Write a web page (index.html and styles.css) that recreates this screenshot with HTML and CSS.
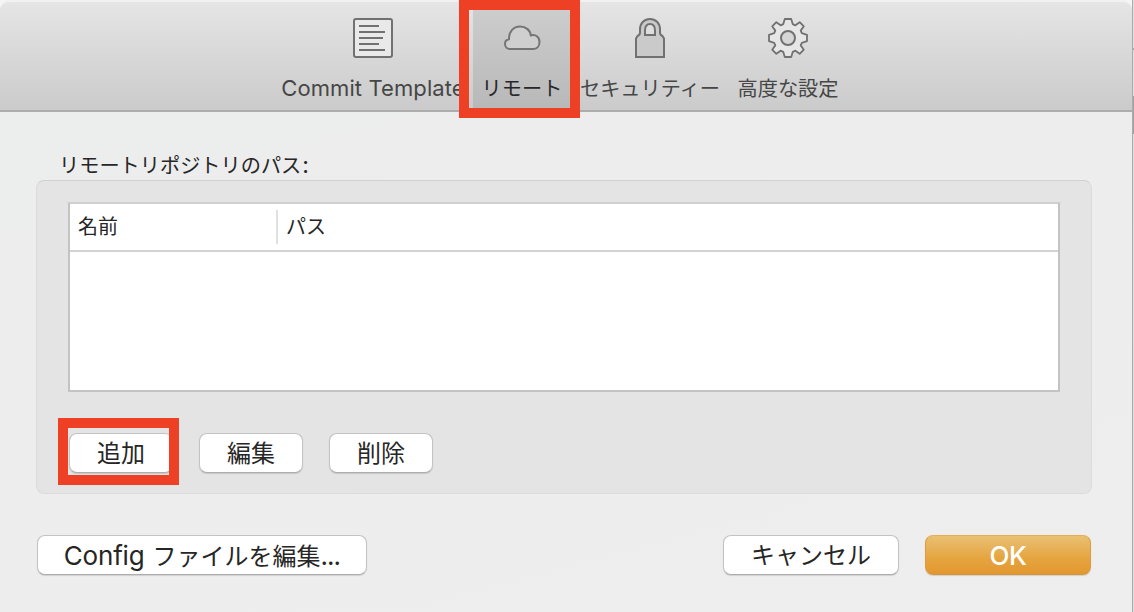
FILE: index.html
```html
<!DOCTYPE html>
<html lang="ja">
<head>
<meta charset="utf-8">
<title>リモート</title>
<link rel="stylesheet" href="styles.css">
</head>
<body>
<div class="window">
  <header class="toolbar">
    <div class="tab">
      <svg class="icon" viewBox="0 0 42 42"><rect x="2" y="2" width="38" height="38" rx="2" fill="#e9e9e9" stroke="#717171" stroke-width="2"/><path d="M7 9h20M7 15h26M7 21h24M7 27h20M7 33h26" stroke="#717171" stroke-width="2"/></svg>
      <span class="tab-label latin">Commit Template</span>
    </div>
    <div class="tab selected">
      <svg class="icon" viewBox="0 0 42 42"><path d="M9 32C6 32 4 29.800 4 27C4 24.500 5.500 22.600 8 22.200C7.500 15 12.500 9.500 19 9.500C25 9.500 29.500 13.500 29.700 18.500C34.500 16.500 38.500 20.500 38.500 25C38.500 29.500 35.500 32 32 32Z" fill="#cfcfcf" stroke="#757575" stroke-width="2" stroke-linejoin="round"/></svg>
      <span class="tab-label">リモート</span>
    </div>
    <div class="tab">
      <svg class="icon" viewBox="0 0 42 42"><path d="M7 40V21.500L8.500 19Q11 18 11 15.500V12.500C11 6 15.500 2 21 2S31 6 31 12.500V15.500Q31 18 33.500 19L35 21.500V40ZM16 18H26V13.500C26 9.500 24 7 21 7S16 9.500 16 13.500Z" fill="#cacaca" fill-rule="evenodd" stroke="#717171" stroke-width="2"/></svg>
      <span class="tab-label security">セキュリティー</span>
    </div>
    <div class="tab">
      <svg class="icon" viewBox="0 0 42 42"><path d="M17.800 2H24.200L25.800 7.200L28.400 8.300L32.700 5.200L36.800 9.300L33.700 13.600L34.800 16.200L40 17.800V24.200L34.800 25.800L33.700 28.400L36.800 32.700L32.700 36.800L28.400 33.700L25.800 34.800L24.200 40H17.800L16.200 34.800L13.600 33.700L9.300 36.800L5.200 32.700L8.300 28.400L7.200 25.800L2 24.200V17.800L7.200 16.200L8.300 13.600L5.200 9.300L9.300 5.200L13.600 8.300L16.200 7.200Z" fill="#e6e6e6" stroke="#717171" stroke-width="1.800" stroke-linejoin="round"/><circle cx="21" cy="21" r="7" fill="#d6d6d6" stroke="#717171" stroke-width="2"/></svg>
      <span class="tab-label">高度な設定</span>
    </div>
  </header>
  <main class="content">
    <h1 class="caption">リモートリポジトリのパス<span class="colon">:</span></h1>
    <section class="group">
      <div class="table">
        <div class="table-head">
          <div class="cell name">名前</div>
          <div class="cell">パス</div>
        </div>
      </div>
      <div class="actions">
        <button class="button">追加</button>
        <button class="button">編集</button>
        <button class="button">削除</button>
      </div>
    </section>
    <footer class="footer">
      <button class="button config"><span class="config-latin">Config</span>ファイルを編集<span class="dots">...</span></button>
      <button class="button cancel">キャンセル</button>
      <button class="button ok">OK</button>
    </footer>
  </main>
</div>
<div class="scroll-edge"></div>
<div class="highlight highlight-tab"></div>
<div class="highlight highlight-add"></div>
</body>
</html>
```
FILE: styles.css
```css
* { box-sizing: border-box; }
body {
  margin: 0;
  width: 1134px;
  height: 612px;
  overflow: hidden;
  position: relative;
  display: flex;
  background: #f5f5f5;
  color: #262626;
  font-family: Inter, "Noto Sans CJK JP", sans-serif;
}
.window {
  width: 1132px;
  height: 612px;
  background: linear-gradient(165deg, #ebeded 0, #ededed 30%, #eeeeee 100%);
  border-radius: 10px 10px 0 0;
}
.toolbar {
  height: 112px;
  display: flex;
  padding-left: 273px;
  border-radius: 10px 10px 0 0;
  border-top: 2px solid #f1f1f1;
  border-bottom: 2px solid #adadad;
  background: linear-gradient(#e5e5e5, #cbcbcb);
}
.tab {
  width: 118px;
  padding-top: 15px;
  display: flex;
  flex-direction: column;
  align-items: center;
  color: #464646;
}
.tab:nth-child(1) { width: 200px; }
.tab:nth-child(2) { width: 98px; }
.tab:nth-child(3) { width: 158px; }
.tab:nth-child(2).selected { background: linear-gradient(#cecece, #b8b8b8); color: #272727; }
.icon { width: 42px; height: 42px; flex: none; }
.tab-label {
  margin-top: 15px;
  font-size: 20.200px;
  line-height: 30px;
  white-space: nowrap;
}
.latin { margin-top: 14px; font-size: 22px; letter-spacing: 0.100px; }
.content { padding: 39px 40px 0 36px; }
.caption {
  margin: 0 0 0 23px;
  height: 29px;
  font-size: 20.200px;
  font-weight: 400;
  line-height: 30px;
}
.colon { font-size: 23px; line-height: 1; margin-left: 1px; }
.group {
  height: 314px;
  padding: 21px 31px;
  border: 1px solid #dcdcdc;
  border-top-color: #d1d1d1;
  border-radius: 8px;
  background: #e4e4e4;
}
.table {
  height: 190px;
  border: 2px solid #c3c3c3;
  border-top-color: #d0d0d0;
  background: #fff;
}
.table-head {
  height: 48px;
  display: flex;
  align-items: center;
  border-bottom: 2px solid #d2d2d2;
}
.cell {
  height: 34px;
  padding-left: 8px;
  font-size: 20px;
  line-height: 34px;
}
.name { width: 208px; border-right: 2px solid #e1e1e1; }
.actions { display: flex; gap: 26px; margin: 41px 0 0 1px; }
.button {
  width: 104px;
  height: 40px;
  padding: 2px 0 0;
  border: 1px solid #c3c3c3;
  border-bottom-color: #adadad;
  border-radius: 8px;
  background: #fff;
  box-shadow: 0 1px 1px rgba(0, 0, 0, 0.13);
  color: #262626;
  font: 24px/36px Inter, "Noto Sans CJK JP", sans-serif;
  white-space: nowrap;
}
.footer { display: flex; padding: 41px 1px 0 1px; }
.config { width: 330px; }
.config-latin { font-size: 26px; letter-spacing: -0.200px; margin-right: 8px; }
.dots { font-size: 26px; letter-spacing: -0.900px; }
.cancel { width: 176px; margin-left: auto; }
.ok {
  width: 166px;
  margin-left: 26px;
  border-color: #e5af54 #df9c3c #d7953b;
  background: linear-gradient(#e9c074, #e5a43e 60%, #e39830);
  color: #fff;
  font-size: 26px;
  font-weight: 500;
  letter-spacing: -0.500px;
}
.scroll-edge {
  width: 2px;
  height: 612px;
  border-left: 1px solid #ababab;
  background: linear-gradient(#e0e0e0 48px, #aaa 48px, #aaa 50px, #e0e0e0 50px, #e0e0e0 96px, #a0a0a0 96px, #a0a0a0 134px, #dedede 134px);
}
/* Callout frames laid over the dialog */
.highlight { position: absolute; border: 10px solid #ed4025; }
.highlight-tab { left: 459px; top: 0; width: 121px; height: 118px; }
.highlight-add { left: 58px; top: 418px; width: 121px; height: 67px; }
```
